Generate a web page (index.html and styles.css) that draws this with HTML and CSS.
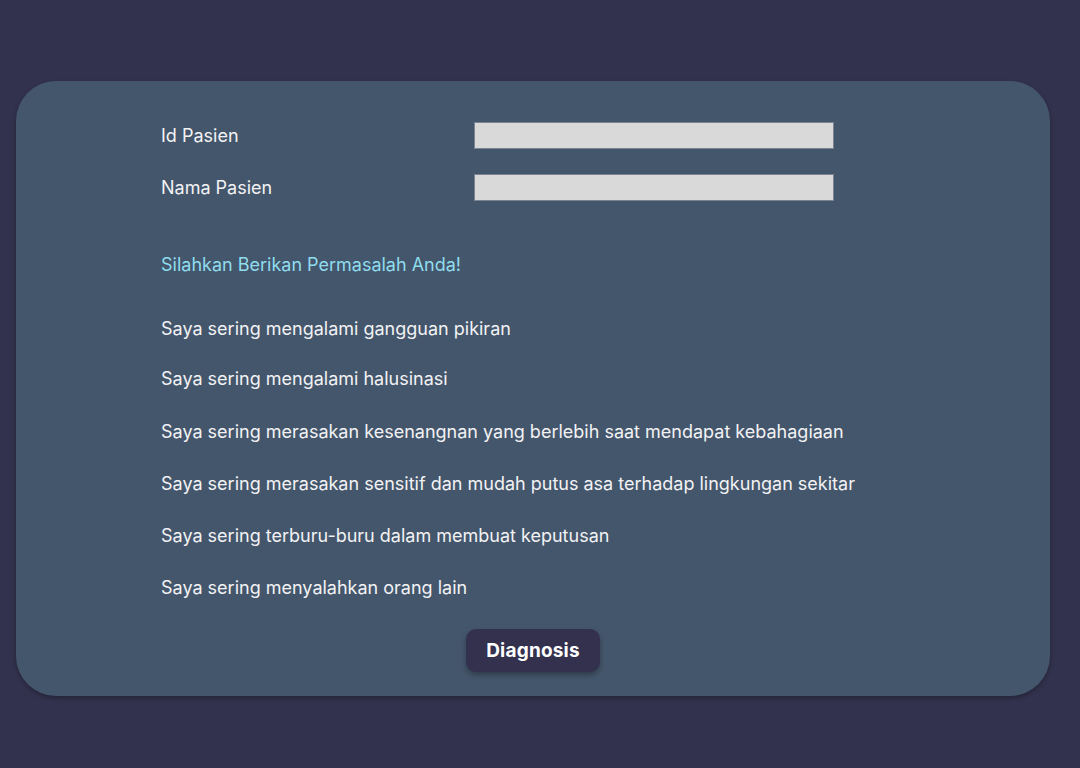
FILE: index.html
```html
<!DOCTYPE html>
<html lang="id">
<head>
<meta charset="utf-8">
<title>Diagnosis</title>
<link rel="stylesheet" href="styles.css">
</head>
<body>
<main class="card">
  <form class="form">
    <div class="field">
      <label class="label" for="id">Id Pasien</label>
      <input class="input" id="id" type="text">
    </div>
    <div class="field">
      <label class="label" for="nama">Nama Pasien</label>
      <input class="input" id="nama" type="text">
    </div>
  </form>
  <p class="heading">Silahkan Berikan Permasalah Anda!</p>
  <ul class="items">
    <li>Saya sering mengalami gangguan pikiran</li>
    <li>Saya sering mengalami halusinasi</li>
    <li>Saya sering merasakan kesenangnan yang berlebih saat mendapat kebahagiaan</li>
    <li>Saya sering merasakan sensitif dan mudah putus asa terhadap lingkungan sekitar</li>
    <li>Saya sering terburu-buru dalam membuat keputusan</li>
    <li>Saya sering menyalahkan orang lain</li>
  </ul>
  <div class="actions">
    <button class="btn" type="button">Diagnosis</button>
  </div>
</main>
</body>
</html>
```

FILE: styles.css
```css
* { box-sizing: border-box; }
html, body { margin: 0; padding: 0; }
body {
  width: 1080px;
  height: 768px;
  background: #33324e;
  font-family: "Inter", "Noto Sans", sans-serif;
  overflow: hidden;
  padding-top: 81px;
}
.card {
  margin-left: 16px;
  width: 1034px;
  height: 615px;
  background: #44566b;
  border-radius: 40px;
  box-shadow: 0 2px 4px rgba(0,0,0,0.3);
  padding: 41px 0 0 145px;
  display: flex;
  flex-direction: column;
}
.form {
  display: flex;
  flex-direction: column;
  gap: 25px;
  margin: 0;
}
.field {
  display: flex;
  align-items: center;
  height: 27px;
}
.label {
  width: 313px;
  color: #f2f2f4;
  font-size: 18px;
  line-height: 24px;
}
.input {
  width: 360px;
  height: 27px;
  background: #d9d9d9;
  border: 1px solid #7a8492;
  border-radius: 0;
  padding: 0;
  margin: 0;
}
.heading {
  margin: 52px 0 0 0;
  color: #8fdcee;
  font-size: 18px;
  line-height: 24px;
}
.items {
  list-style: none;
  margin: 39px 0 0 0;
  padding: 0;
  display: flex;
  flex-direction: column;
  gap: 28px;
  color: #f2f2f4;
  font-size: 18px;
  line-height: 24px;
}
.items li:first-child { margin-top: 1px; margin-bottom: -2px; }
.items li:nth-child(3) { margin-top: 1px; }
.actions {
  display: flex;
  justify-content: center;
  margin-left: -145px;
  margin-top: 29px;
}
.btn {
  width: 134px;
  height: 43px;
  border: none;
  border-radius: 10px;
  background: #33314e;
  color: #ffffff;
  font-family: "Inter", "Noto Sans", sans-serif;
  font-weight: 700;
  font-size: 19px;
  letter-spacing: 0.2px;
  box-shadow: 0 3px 5px rgba(0,0,0,0.3);
  padding: 0;
}
```
